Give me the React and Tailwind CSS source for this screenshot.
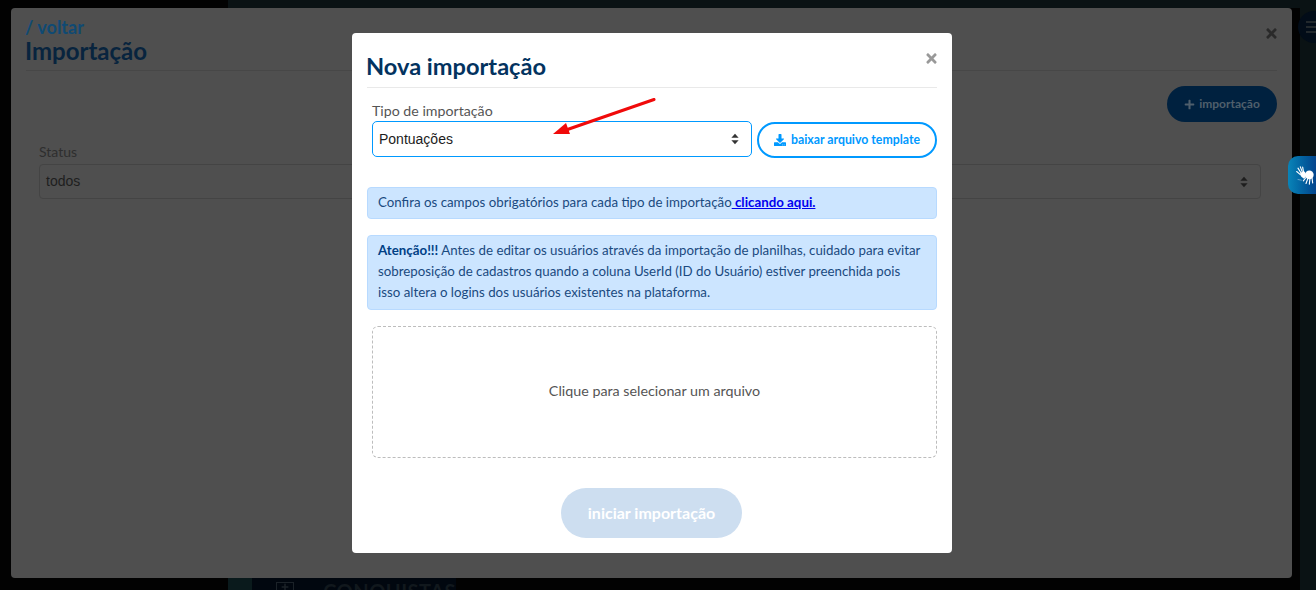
import React from 'react';
import { FaDownload, FaPlus, FaTimes } from 'react-icons/fa';

const SortIcon = ({ className }) => (
  <svg viewBox="0 0 10 14" className={className} fill="currentColor">
    <path d="M5 0.5 L9.5 5.5 H0.5 Z" />
    <path d="M5 13.5 L0.5 8.5 H9.5 Z" />
  </svg>
);

const HandsIcon = () => (
  <svg viewBox="0 0 30 28" className="h-[25px] w-[28px] text-white" fill="currentColor" stroke="currentColor" strokeLinecap="round">
    {/* back hand */}
    <g strokeWidth="1.7">
      <path d="M3 3 L8 11" />
      <path d="M6.5 1 L10 10" />
      <path d="M10 1.5 L11.5 10" />
      <path d="M1 8 L7 13" />
    </g>
    <path d="M6 10 L13 8 L16 14 L12 19 L8 16 Z" stroke="none" />
    <path d="M3 20 L8 21" strokeWidth="1" opacity="0.6" />
    {/* front hand */}
    <circle cx="20" cy="13" r="6.5" stroke="none" />
    <g strokeWidth="1.7">
      <path d="M15 17 L11 22" />
      <path d="M18 18 L15 26" />
      <path d="M21 18 L20 27" />
      <path d="M24 17 L25 25" />
    </g>
  </svg>
);

const Arrow = () => (
  <svg className="absolute left-[200px] top-[65px]" width="110" height="40" viewBox="0 0 110 40">
    <path d="M102 1.5 L14 32" stroke="#f00a0a" strokeWidth="3" strokeLinecap="round" fill="none" />
    <path d="M1 36 L14 25 L18 36 Z" fill="#f00a0a" />
  </svg>
);

const App = () => {
  return (
    <div className="relative h-[590px] w-full overflow-hidden bg-[#020202] font-['Lato',sans-serif]">
      {/* what shows behind the first modal */}
      <div className="absolute left-[228px] top-0 h-[8px] w-[1088px] bg-[#0a1214]" />
      <div className="absolute right-0 top-0 h-[590px] w-[16px] bg-[#0a1214]" />
      <div className="absolute right-[-14px] top-[11px] flex h-[32px] w-[32px] flex-col items-center justify-center gap-[3px] rounded-full bg-[#020c18] pr-[3px]">
        <span className="h-[2px] w-[14px] bg-[#22282c]" />
        <span className="h-[2px] w-[14px] bg-[#22282c]" />
        <span className="h-[2px] w-[14px] bg-[#22282c]" />
      </div>
      <div className="absolute bottom-0 left-[228px] h-[12px] w-[24px] bg-[#0a1a1c]" />
      <div className="absolute bottom-0 left-[252px] flex h-[12px] w-[204px] items-start gap-[29px] overflow-hidden bg-[#01070f] pl-[24px] pt-[4px]">
        <span className="flex h-[14px] w-[20px] items-start justify-center border border-[#1b2228] text-[#1b2228]">
          <FaPlus className="h-[8px] w-[8px]" />
        </span>
        <span className="whitespace-nowrap text-[20px] font-bold leading-[18px] tracking-wide text-[#11181d]">CONQUISTAS</span>
      </div>

      {/* back modal */}
      <div className="relative z-10 mx-[11px] mt-2 h-[570px] w-[1281px] rounded-[4px] bg-[#4f4f4f] px-[15px] pt-[9px]">
        <div className="-ml-px text-[18px] font-bold leading-[20px] text-[#0f4a73]">/ voltar</div>
        <h2 className="-ml-px text-[24px] font-bold leading-[28px] text-[#08243e]">Importação</h2>
        <FaTimes className="absolute right-[13px] top-[18px] h-[15px] w-[15px] text-[#2a2a2a]" />
        <div className="mt-[5px] h-px bg-[#474747]" />
        <div className="mt-[15px] flex justify-end">
          <div className="flex h-9 w-[110px] items-center justify-center gap-1 rounded-full bg-[#00213f] text-[12px] font-bold text-[#4f5f6c]">
            <FaPlus className="h-[11px] w-[11px]" />
            importação
          </div>
        </div>
        <div className="ml-[13px] mr-[16px] mt-[21px]">
          <div className="text-[14px] leading-[18px] text-[#2e2e2e]">Status</div>
          <div className="mt-[3px] flex h-[35px] items-center justify-between rounded-[4px] border border-[#444444] pl-[6px] pr-[12px] font-['Liberation_Sans',sans-serif] text-[14px] text-[#1e1e1e]">
            todos
            <SortIcon className="h-[12px] w-[8px] text-[#1e1e1e]" />
          </div>
        </div>
      </div>

      {/* accessibility widget */}
      <div className="absolute right-0 top-[156px] z-10 flex h-[38px] w-[28px] items-center justify-start rounded-l-[10px] bg-gradient-to-r from-[#0a84b8] to-[#04448c] pl-[8px]">
        <HandsIcon />
      </div>

      {/* top modal */}
      <div className="absolute left-[352px] top-[33px] z-20 h-[520px] w-[600px] rounded-[4px] bg-white px-[15px] pt-[17px]">
        <h1 className="-ml-px text-[23.6px] font-bold leading-[33px] text-[#03335f]">Nova importação</h1>
        <FaTimes className="absolute right-[13px] top-[18px] h-[15px] w-[15px] text-[#999999]" />
        <div className="mt-[4px] h-px bg-[#e9e9e9]" />
        <div className="mt-[14px] flex items-end gap-[5px] pl-[5px]">
          <div className="w-[380px]">
            <div className="text-[14.2px] leading-[18px] text-[#555555]">Tipo de importação</div>
            <div className="mt-[1px] flex h-9 items-center justify-between rounded-[5px] border border-[#0099ff] pl-[6px] pr-[12px] font-['Liberation_Sans',sans-serif] text-[14px] text-[#1c1c1c]">
              Pontuações
              <SortIcon className="h-[12px] w-[8px] text-[#333333]" />
            </div>
          </div>
          <div className="mb-[-1px] flex h-9 w-[180px] items-center justify-center gap-[5px] rounded-full border-2 border-[#0099ff] text-[12.3px] font-bold text-[#0099ff]">
            <FaDownload className="h-3 w-3" />
            baixar arquivo template
          </div>
        </div>
        <div className="mt-[30px] flex h-8 items-center rounded-[4px] border border-[#b8daff] bg-[#cce5ff] px-[10px] text-[13.3px] text-[#1a4a80]">
          Confira os campos obrigatórios para cada tipo de importação
          <a href="#" className="font-bold text-[#0000ee] underline">&nbsp;clicando aqui.</a>
        </div>
        <div className="mt-4 h-[75px] rounded-[4px] border border-[#b8daff] bg-[#cce5ff] px-[10px] py-[4px] text-[13.3px] leading-[21px] text-[#1a4a80]">
          <b className="text-[#004085]">Atenção!!!</b> Antes de editar os usuários através da importação de planilhas, cuidado para evitar<br />
          sobreposição de cadastros quando a coluna UserId (ID do Usuário) estiver preenchida pois<br />
          isso altera o logins dos usuários existentes na plataforma.
        </div>
        <div className="ml-[5px] mt-4 flex h-[132px] items-center justify-center rounded-[6px] border border-dashed border-[#bdbdbd] pb-[2px] text-[14.3px] text-[#555555]">
          Clique para selecionar um arquivo
        </div>
        <div className="mt-[30px] flex justify-center pr-[1px]">
          <div className="flex h-[50px] w-[181px] items-center justify-center rounded-full bg-[#cddef0] text-[16px] font-bold text-white">
            iniciar importação
          </div>
        </div>
        <Arrow />
      </div>
    </div>
  );
};

export default App;
